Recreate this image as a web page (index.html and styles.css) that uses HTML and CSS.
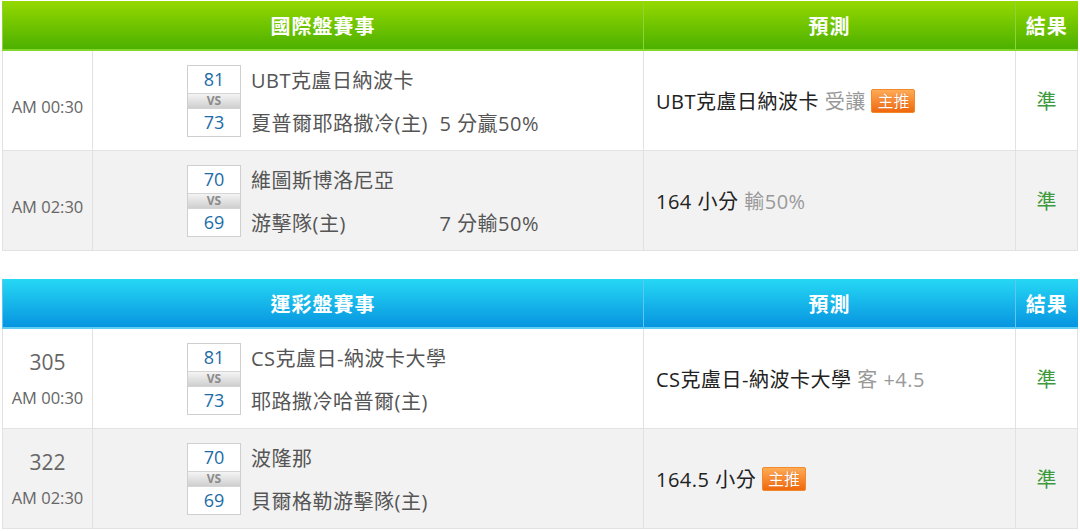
FILE: index.html
```html
<!DOCTYPE html>
<html>
<head>
	<title>賽事預測</title>
	<link rel="stylesheet" href="styles.css">
</head>
<body class="page">
	<table class="board green">
		<colgroup>
			<col class="colTime"><col class="colMatch"><col class="colPredict"><col class="colResult">
		</colgroup>
		<tr class="headRow">
			<th colspan="2">國際盤賽事</th>
			<th>預測</th>
			<th>結果</th>
		</tr>
		<tr class="row">
			<td class="timeCell"><div class="time">AM 00:30</div></td>
			<td class="matchCell">
				<div class="match">
					<div class="score">
						<div class="num">81</div>
						<div class="vs">VS</div>
						<div class="num">73</div>
					</div>
					<div class="teams">
						<div class="team">UBT克盧日納波卡</div>
						<div class="team">夏普爾耶路撒冷(主)<span class="spread">5 分贏50%</span></div>
					</div>
				</div>
			</td>
			<td class="predictCell">UBT克盧日納波卡 <span class="sub">受讓</span> <span class="badge">主推</span></td>
			<td class="resultCell">準</td>
		</tr>
		<tr class="row alt">
			<td class="timeCell"><div class="time">AM 02:30</div></td>
			<td class="matchCell">
				<div class="match">
					<div class="score">
						<div class="num">70</div>
						<div class="vs">VS</div>
						<div class="num">69</div>
					</div>
					<div class="teams">
						<div class="team">維圖斯博洛尼亞</div>
						<div class="team">游擊隊(主)<span class="spread">7 分輸50%</span></div>
					</div>
				</div>
			</td>
			<td class="predictCell">164 小分 <span class="sub">輸50%</span></td>
			<td class="resultCell">準</td>
		</tr>
	</table>

	<table class="board blue">
		<colgroup>
			<col class="colTime"><col class="colMatch"><col class="colPredict"><col class="colResult">
		</colgroup>
		<tr class="headRow">
			<th colspan="2">運彩盤賽事</th>
			<th>預測</th>
			<th>結果</th>
		</tr>
		<tr class="row">
			<td class="timeCell"><div class="gameNo">305</div><div class="time">AM 00:30</div></td>
			<td class="matchCell">
				<div class="match">
					<div class="score">
						<div class="num">81</div>
						<div class="vs">VS</div>
						<div class="num">73</div>
					</div>
					<div class="teams">
						<div class="team">CS克盧日-納波卡大學</div>
						<div class="team">耶路撒冷哈普爾(主)</div>
					</div>
				</div>
			</td>
			<td class="predictCell">CS克盧日-納波卡大學 <span class="sub">客 +4.5</span></td>
			<td class="resultCell">準</td>
		</tr>
		<tr class="row alt">
			<td class="timeCell"><div class="gameNo">322</div><div class="time">AM 02:30</div></td>
			<td class="matchCell">
				<div class="match">
					<div class="score">
						<div class="num">70</div>
						<div class="vs">VS</div>
						<div class="num">69</div>
					</div>
					<div class="teams">
						<div class="team">波隆那</div>
						<div class="team">貝爾格勒游擊隊(主)</div>
					</div>
				</div>
			</td>
			<td class="predictCell">164.5 小分 <span class="badge">主推</span></td>
			<td class="resultCell">準</td>
		</tr>
	</table>
</body>
</html>
```

FILE: styles.css
```css
.page{
	margin:0;
	padding:1px 3px 0 2px;
	background:#fff;
	font-family:"Open Sans","Noto Sans CJK TC",sans-serif;
}
.board{
	width:1075px;
	border-collapse:collapse;
	table-layout:fixed;
}
.blue{
	margin-top:28px;
}
.colTime{
	width:90px;
}
.colMatch{
	width:551px;
}
.colPredict{
	width:372px;
}
.colResult{
	width:62px;
}
.headRow th{
	height:48px;
	padding:0;
	color:#fff;
	font-size:20px;
	font-weight:bold;
	text-align:center;
	letter-spacing:1px;
}
.green .headRow th{
	background:linear-gradient(#95d800,#4cb000);
	border-bottom:2px solid #84d62a;
	border-left:1px solid #8fd33a;
}
.blue .headRow th{
	background:linear-gradient(#26d8f4,#0794e0);
	border-bottom:2px solid #5fcdf3;
	border-left:1px solid #5cc8f0;
}
.row td{
	height:99px;
	padding:0;
	border:1px solid #e2e2e2;
	background:#fff;
	vertical-align:middle;
}
.alt td{
	background:#f2f2f2;
}
.timeCell{
	text-align:center;
	color:#666;
}
.time{
	font-size:16.5px;
	margin-top:4px;
}
.green .time{
	margin-top:12px;
}
.gameNo{
	font-size:21px;
	margin-bottom:10px;
}
.match{
	display:flex;
	margin-left:94px;
	align-items:center;
}
.score{
	flex:none;
	width:52px;
	border:1px solid #cfcfcf;
	display:flex;
	flex-direction:column;
}
.num{
	height:27px;
	line-height:27px;
	background:#fff;
	color:#1b6ca8;
	font-size:18px;
	text-align:center;
}
.vs{
	height:14px;
	line-height:14px;
	background:linear-gradient(#f4f4f4,#cfcfcf);
	border-top:1px solid #d4d4d4;
	border-bottom:1px solid #d4d4d4;
	color:#8a8a8a;
	font-size:12px;
	font-weight:bold;
	text-align:center;
}
.teams{
	flex:none;
	margin-left:10px;
	margin-top:3px;
	height:71px;
	width:288px;
	display:flex;
	flex-direction:column;
	justify-content:space-between;
}
.team{
	display:flex;
	height:28px;
	line-height:28px;
	font-size:20px;
	letter-spacing:0.5px;
	color:#555;
	white-space:nowrap;
}
.spread{
	margin-left:auto;
	padding-left:6px;
}
.predictCell{
	padding-left:12px !important;
	font-size:20px;
	letter-spacing:0.5px;
	color:#222;
	white-space:nowrap;
}
.sub{
	color:#999;
}
.badge{
	display:inline-block;
	padding:0 5px;
	height:22px;
	line-height:22px;
	font-size:16px;
	letter-spacing:0;
	color:#fff;
	background:linear-gradient(#ffab55,#f0680e);
	border:1px solid #f08a2c;
	border-radius:2px;
	vertical-align:2px;
	text-shadow:0 0 1px #c05000;
}
.resultCell{
	text-align:center;
	color:#3d9b3d;
	font-size:20px;
}
```
